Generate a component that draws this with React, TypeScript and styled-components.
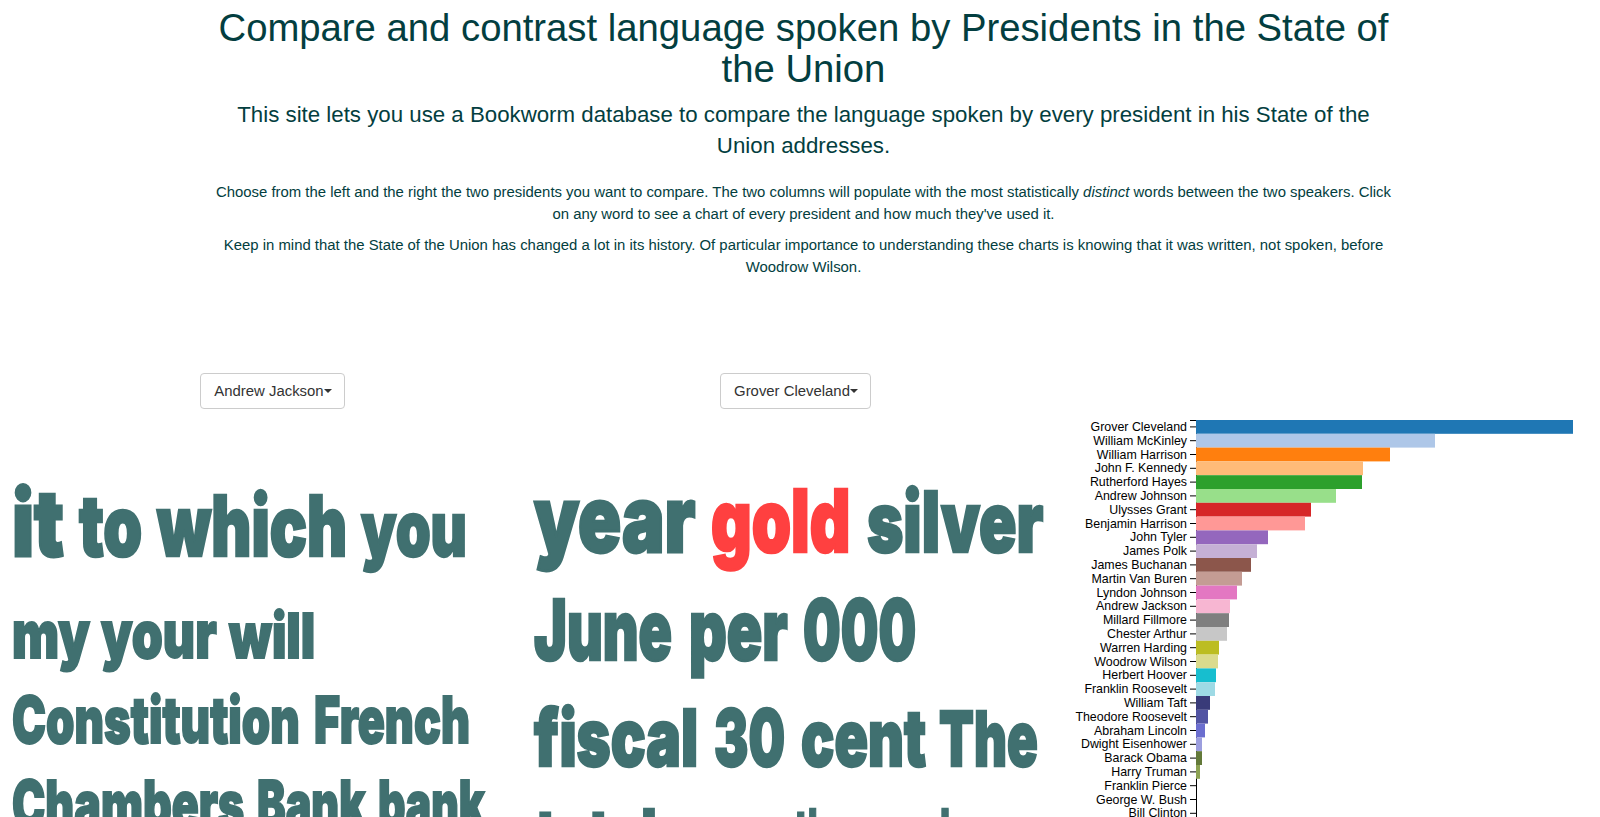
import { useLayoutEffect, useRef } from 'react';
import styled, { createGlobalStyle } from 'styled-components';

const GlobalStyle = createGlobalStyle`
  html, body {
    margin: 0;
    height: 817px;
    overflow: hidden;
    background: #fff;
  }
  body {
    font-family: "Liberation Sans", Arial, sans-serif;
    font-size: 14.9px;
    line-height: 21.5px;
    color: #033e40;
  }
`;

const Intro = styled.header`
  width: 1180px;
  margin: 0 auto;
  padding: 7px 0 0 7px;
  text-align: center;
`;

const Title = styled.h1`
  margin: 0;
  font-size: 38.27px;
  font-weight: 400;
  line-height: 41px;
`;

const Lead = styled.p`
  margin: 10px 0 21px;
  font-size: 22.28px;
  line-height: 31px;
`;

const Body = styled.p`
  margin: 0 0 10px;
`;

const Columns = styled.main`
  display: grid;
  grid-template-columns: 523px 523px 1fr;
  margin-top: 95px;
`;

const Col = styled.section`
  display: flex;
  flex-direction: column;
`;

const Picker = styled.div`
  display: flex;
  justify-content: center;
  padding-left: 22px;
`;

const Dropdown = styled.button`
  height: 36px;
  padding: 0 12px 0 13px;
  background: #fff;
  border: 1px solid #ccc;
  border-radius: 4px;
  font: 14.9px "Liberation Sans", Arial, sans-serif;
  color: #333;
  display: flex;
  align-items: center;
`;

const Caret = styled.span`
  width: 0;
  height: 0;
  border-top: 4px solid #333;
  border-left: 4px solid transparent;
  border-right: 4px solid transparent;
`;

const Cloud = styled.div<{ $top: number }>`
  padding-top: ${(p) => p.$top}px;
  display: flex;
  flex-direction: column;
`;

const WordRow = styled.div<{ $height: number }>`
  height: ${(p) => p.$height}px;
  display: flex;
  align-items: baseline;
  white-space: nowrap;
`;

const WordBox = styled.span<{ $x: number; $width: number }>`
  display: inline-block;
  margin-left: ${(p) => p.$x}px;
  width: ${(p) => p.$width}px;
`;

const WordText = styled.span<{ $size: number; $hot?: boolean }>`
  display: inline-block;
  transform-origin: left center;
  font-family: Inter, "Liberation Sans", sans-serif;
  font-weight: 900;
  font-size: ${(p) => p.$size}px;
  line-height: 1;
  color: ${(p) => (p.$hot ? '#ff4040' : '#407070')};
  -webkit-text-stroke: ${(p) => p.$size * 0.03}px currentColor;
`;

const Chart = styled.svg`
  display: block;
  margin: 47px 0 0 19px;
  overflow: visible;
`;

// word, gap before it, width, font size
type CloudWord = [string, number, number, number];

const leftRows: { height: number; words: CloudWord[] }[] = [
  { height: 124, words: [['it', 12, 52, 92], ['to', 15, 63, 84], ['which', 15, 190, 84], ['you', 14, 106, 76]] },
  { height: 87, words: [['my', 12, 78, 66], ['your', 11, 116, 66], ['will', 12, 86, 62]] },
  { height: 84, words: [['Constitution', 12, 288, 64], ['French', 14, 156, 64]] },
  { height: 84, words: [['Chambers', 12, 232, 64], ['Bank', 13, 108, 64], ['bank', 13, 107, 64]] },
];

const rightRows: { height: number; words: CloudWord[] }[] = [
  { height: 115, words: [['year', 11, 161, 92], ['gold', 16, 139, 86], ['silver', 17, 176, 84]] },
  { height: 110, words: [['June', 11, 138, 84], ['per', 17, 99, 84], ['000', 15, 113, 84]] },
  { height: 100, words: [['fiscal', 11, 164, 79], ['30', 16, 71, 79], ['cent', 16, 125, 78], ['The', 13, 99, 76]] },
  { height: 100, words: [['total', 13, 121, 79], ['our', 28, 82, 79], ['thousand', 28, 155, 79]] },
];

const bars: [string, number, string][] = [
  ['Grover Cleveland', 377, '#1f77b4'],
  ['William McKinley', 239, '#aec7e8'],
  ['William Harrison', 194, '#ff7f0e'],
  ['John F. Kennedy', 167, '#ffbb78'],
  ['Rutherford Hayes', 166, '#2ca02c'],
  ['Andrew Johnson', 140, '#98df8a'],
  ['Ulysses Grant', 115, '#d62728'],
  ['Benjamin Harrison', 109, '#ff9896'],
  ['John Tyler', 72, '#9467bd'],
  ['James Polk', 61, '#c5b0d5'],
  ['James Buchanan', 55, '#8c564b'],
  ['Martin Van Buren', 46, '#c49c94'],
  ['Lyndon Johnson', 41, '#e377c2'],
  ['Andrew Jackson', 34, '#f7b6d2'],
  ['Millard Fillmore', 33, '#7f7f7f'],
  ['Chester Arthur', 31, '#c7c7c7'],
  ['Warren Harding', 23, '#bcbd22'],
  ['Woodrow Wilson', 22, '#dbdb8d'],
  ['Herbert Hoover', 20, '#17becf'],
  ['Franklin Roosevelt', 19, '#9edae5'],
  ['William Taft', 14, '#393b79'],
  ['Theodore Roosevelt', 12, '#5254a3'],
  ['Abraham Lincoln', 9, '#6b6ecf'],
  ['Dwight Eisenhower', 6, '#9c9ede'],
  ['Barack Obama', 6, '#637939'],
  ['Harry Truman', 4, '#8ca252'],
  ['Franklin Pierce', 0, '#b5cf6b'],
  ['George W. Bush', 0, '#cedb9c'],
  ['Bill Clinton', 0, '#8c6d31'],
];

const STEP = 13.8;
const AXIS = 131;

function BarChart() {
  const height = bars.length * STEP + 4;
  return (
    <Chart width={540} height={height}>
      <path d={`M${AXIS - 6} 0.5H${AXIS}.5V${height}`} fill="none" stroke="#000" />
      {bars.map(([name, value, color], i) => {
        const y = i * STEP;
        return (
          <g key={name}>
            <rect x={AXIS} y={y} width={value} height={STEP} fill={color} />
            <line x1={AXIS - 6} x2={AXIS} y1={y + STEP / 2} y2={y + STEP / 2} stroke="#000" />
            <text
              x={AXIS - 9}
              y={y + STEP / 2 + 4}
              textAnchor="end"
              fontSize={12.4}
              fontFamily='"Liberation Sans", Arial, sans-serif'
              fill="#000"
            >
              {name}
            </text>
          </g>
        );
      })}
    </Chart>
  );
}

// squeezes a word into its box, there is no condensed font to use here
function Word({ word }: { word: CloudWord }) {
  const [text, gap, width, size] = word;
  const ref = useRef<HTMLSpanElement>(null);

  useLayoutEffect(() => {
    const el = ref.current;
    if (el) el.style.transform = `scaleX(${width / el.offsetWidth})`;
  }, [width]);

  return (
    <WordBox $x={gap} $width={width}>
      <WordText ref={ref} $size={size} $hot={text === 'gold'}>
        {text}
      </WordText>
    </WordBox>
  );
}

function WordCloud({ rows, top }: { rows: { height: number; words: CloudWord[] }[]; top: number }) {
  return (
    <Cloud $top={top}>
      {rows.map((row) => (
        <WordRow key={row.words[0][0]} $height={row.height}>
          {row.words.map((word) => (
            <Word key={word[0]} word={word} />
          ))}
        </WordRow>
      ))}
    </Cloud>
  );
}

export default function App() {
  return (
    <>
      <GlobalStyle />
      <Intro>
        <Title>Compare and contrast language spoken by Presidents in the State of the Union</Title>
        <Lead>
          This site lets you use a Bookworm database to compare the language spoken by every president in his
          State of the Union addresses.
        </Lead>
        <Body>
          Choose from the left and the right the two presidents you want to compare. The two columns will
          populate with the most statistically <em>distinct</em> words between the two speakers. Click on any
          word to see a chart of every president and how much they've used it.
        </Body>
        <Body>
          Keep in mind that the State of the Union has changed a lot in its history. Of particular importance
          to understanding these charts is knowing that it was written, not spoken, before Woodrow Wilson.
        </Body>
      </Intro>
      <Columns>
        <Col>
          <Picker>
            <Dropdown>
              Andrew Jackson
              <Caret />
            </Dropdown>
          </Picker>
          <WordCloud rows={leftRows} top={68} />
        </Col>
        <Col>
          <Picker>
            <Dropdown>
              Grover Cleveland
              <Caret />
            </Dropdown>
          </Picker>
          <WordCloud rows={rightRows} top={64} />
        </Col>
        <Col>
          <BarChart />
        </Col>
      </Columns>
    </>
  );
}
